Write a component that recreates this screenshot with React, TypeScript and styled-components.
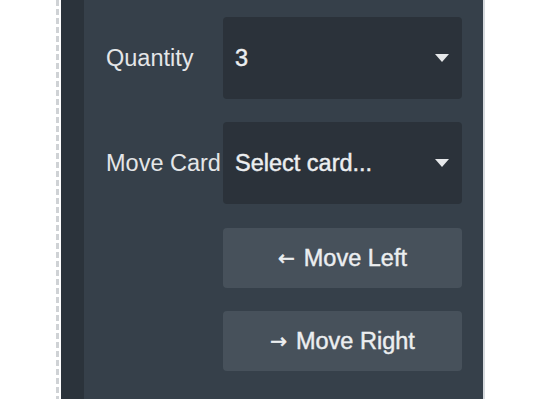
import React from 'react';
import styled, { createGlobalStyle } from 'styled-components';

const GlobalStyle = createGlobalStyle`
    html, body {
        margin: 0;
        padding: 0;
        background: #ffffff;
        height: 100%;
        overflow: hidden;
    }
    #root {
        height: 100%;
    }
`;

const Page = styled.div`
    display: flex;
    height: 399px;
    padding-left: 56px;
    font-family: 'Liberation Sans', Arial, Helvetica, sans-serif;
`;

const DashedGuide = styled.div`
    width: 3px;
    margin-right: 2px;
    background: repeating-linear-gradient(to bottom, #cfd2d5 0, #cfd2d5 6px, transparent 6px, transparent 9px);
`;

const Gutter = styled.div`
    width: 23px;
    background: #2b333b;
`;

const Panel = styled.div`
    width: 401px;
    background: #36404a;
    border-right: 2px solid #d6dade;
    padding: 17px 21px 0 22px;
    box-sizing: border-box;
    display: flex;
    flex-direction: column;
    gap: 23px;
`;

const Row = styled.div`
    display: flex;
    align-items: center;
`;

const Label = styled.div`
    width: 117px;
    flex-shrink: 0;
    font-size: 23.5px;
    color: #e4e6e8;
    white-space: nowrap;
`;

const Select = styled.div`
    flex: 1;
    height: 82px;
    border-radius: 4px;
    background: #2b323a;
    display: flex;
    align-items: center;
    justify-content: space-between;
    padding: 0 13px 0 12px;
    box-sizing: border-box;
    font-size: 23.5px;
    color: #eceef0;
    -webkit-text-stroke: 0.45px #eceef0;
`;

const Caret = styled.span`
    width: 0;
    height: 0;
    border-left: 7px solid transparent;
    border-right: 7px solid transparent;
    border-top: 8px solid #e6e8ea;
`;

const ButtonStack = styled.div`
    margin-top: 1px;
    margin-left: 117px;
    display: flex;
    flex-direction: column;
    gap: 23px;
`;

const Button = styled.div`
    height: 60px;
    border-radius: 4px;
    background: #47515b;
    display: flex;
    align-items: center;
    justify-content: center;
    gap: 9px;
    font-size: 23.5px;
    color: #eceef0;
    -webkit-text-stroke: 0.45px #eceef0;
`;

const Arrow = styled.span`
    font-family: 'DejaVu Sans', sans-serif;
    font-size: 20px;
    -webkit-text-stroke: 0.6px #eceef0;
`;

const App = () => {
    return (
        <>
            <GlobalStyle />
            <Page>
                <DashedGuide />
                <Gutter />
                <Panel>
                    <Row>
                        <Label>Quantity</Label>
                        <Select>
                            <span>3</span>
                            <Caret />
                        </Select>
                    </Row>
                    <Row>
                        <Label>Move Card</Label>
                        <Select>
                            <span>Select card...</span>
                            <Caret />
                        </Select>
                    </Row>
                    <ButtonStack>
                        <Button>
                            <Arrow>←</Arrow>
                            <span>Move Left</span>
                        </Button>
                        <Button>
                            <Arrow>→</Arrow>
                            <span>Move Right</span>
                        </Button>
                    </ButtonStack>
                </Panel>
            </Page>
        </>
    );
};

export default App;
